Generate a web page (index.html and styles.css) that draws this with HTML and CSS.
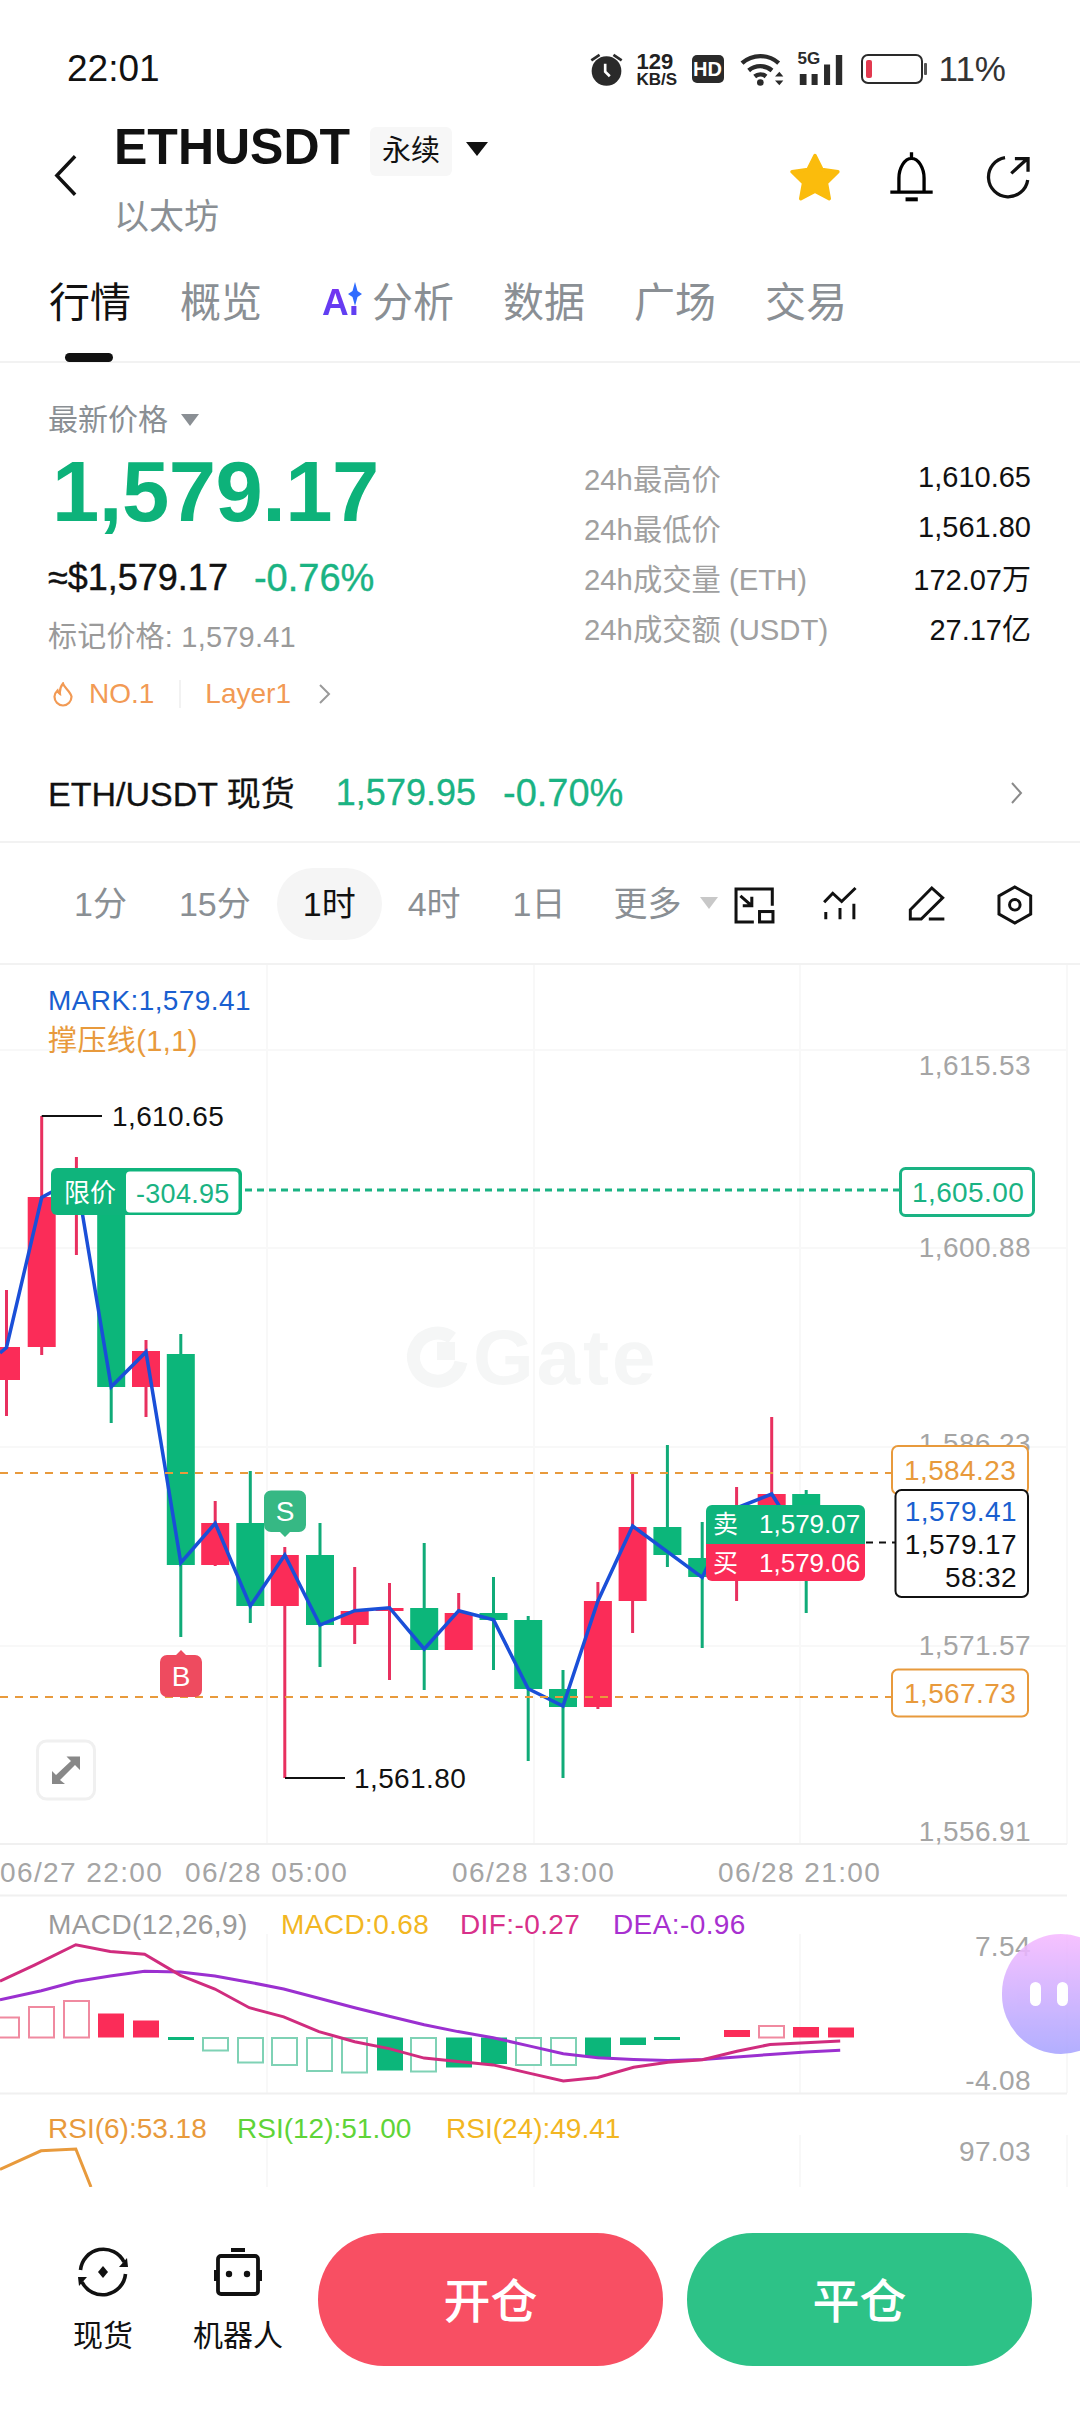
FILE: index.html
```html
<!DOCTYPE html>
<html lang="zh-CN">
<head>
    <meta charset="UTF-8">
    <meta name="viewport" content="width=device-width, initial-scale=1.0">
    <title>ETHUSDT</title>
    <link rel="stylesheet" href="styles.css">
</head>
<body>
<div class="page">
    <div class="status-bar">
        <span class="clock">22:01</span>
        <div class="status-icons">
            <svg class="ic-alarm" viewBox="88 62 100 108"><circle cx="138" cy="122" r="45" fill="#2a2a2a"/><path d="M92 90l25-17M184 90l-25-17" stroke="#2a2a2a" stroke-width="8" fill="none"/><path d="M134 100v24l14 14" stroke="#fff" stroke-width="8" fill="none"/></svg>
            <div class="net"><span class="net-num">129</span><span class="net-unit">KB/S</span></div>
            <span class="hd">HD</span>
            <svg class="ic-wifi" viewBox="534 60 138 110"><path d="M546 96a82 82 0 0 1 110 0M566 118a54 54 0 0 1 70 0M584 136a26 26 0 0 1 34 0" stroke="#2a2a2a" stroke-width="13" fill="none"/><circle cx="601" cy="154" r="10" fill="#2a2a2a"/><path d="M645 136h25l-12-14zM645 148h25l-12 14z" fill="#2a2a2a"/></svg>
            <div class="signal">
                <span class="five-g">5G</span>
                <svg class="ic-bars" viewBox="720 66 136 98"><path d="M725 128h20v33h-20zM760 128h18v33h-18zM797 100h18v61h-18zM832 72h19v89h-19z" fill="#2a2a2a"/></svg>
            </div>
            <div class="battery"><span class="battery-level"></span></div>
            <span class="battery-pct">11%</span>
        </div>
    </div>

    <div class="header">
        <svg class="ic-back" viewBox="0 0 26 46"><path d="M23 3L4 23l19 20" stroke="#111" stroke-width="3.6" fill="none"/></svg>
        <div class="title-block">
            <div class="title-line">
                <span class="symbol">ETHUSDT</span>
                <span class="chip">永续</span>
                <span class="chip-caret"></span>
            </div>
            <div class="subtitle">以太坊</div>
        </div>
        <div class="header-actions">
            <svg class="ic-star" viewBox="1 1 22 21"><path d="M12 2.500l3 6 6.800 1-4.900 4.800 1.200 6.700-6.100-3.200-6.100 3.200 1.200-6.700-4.900-4.800 6.800-1z" fill="#fbbc0c" stroke="#fbbc0c" stroke-width="1.500" stroke-linejoin="round"/></svg>
            <svg class="ic-bell" viewBox="988 358 136 154"><path d="M1018 482V440c0-30 17-60 38-60s38 30 38 60v42M992 482h128M1056 362v18" stroke="#000" stroke-width="10" fill="none"/><rect x="1038" y="498" width="37" height="12"/></svg>
            <svg class="ic-share" viewBox="1274 372 140 138"><path d="M1335 382A60 60 0 1 0 1404 450M1354 430l48-44M1365 385h40v40" stroke="#111" stroke-width="10" fill="none"/></svg>
        </div>
    </div>

    <div class="tabs">
        <span class="tab tab-active">行情</span>
        <span class="tab">概览</span>
        <span class="tab tab-ai"><span class="ai-mark">Ai<svg class="ai-spark" viewBox="0 0 14 24"><path d="M7 0l2.500 9L14 12l-4.500 3L7 24l-2.500-9L0 12l4.500-3z" fill="#2f6bff"/></svg></span>分析</span>
        <span class="tab">数据</span>
        <span class="tab">广场</span>
        <span class="tab">交易</span>
    </div>

    <div class="ticker">
        <div class="ticker-left">
            <div class="last-label">最新价格<span class="caret-gray"></span></div>
            <div class="last-price">1,579.17</div>
            <div class="fiat-line"><span>≈$1,579.17</span><span class="pct">-0.76%</span></div>
            <div class="mark-line">标记价格: 1,579.41</div>
            <div class="rank-line">
                <svg class="ic-flame" viewBox="0 0 22 25"><path d="M11 1.500c1 4 7 7.500 8.500 13a8.700 8.700 0 0 1-8.500 9 8.700 8.700 0 0 1-8.500-9c0-3 1.500-4.500 3-6 .5 2 1.500 3 2.500 3.500C7.500 8 9 4 11 1.500z" stroke="#f29a54" stroke-width="2.200" fill="none"/></svg>
                <span>NO.1</span>
                <span class="rank-sep"></span>
                <span>Layer1</span>
                <svg class="ic-chevron" viewBox="0 0 13 20"><path d="M2 1l9 9-9 9" stroke="#9a9a9a" stroke-width="2" fill="none"/></svg>
            </div>
        </div>
        <div class="ticker-right">
            <span class="stat-label">24h最高价</span><span class="stat-value">1,610.65</span>
            <span class="stat-label">24h最低价</span><span class="stat-value">1,561.80</span>
            <span class="stat-label">24h成交量 (ETH)</span><span class="stat-value">172.07万</span>
            <span class="stat-label">24h成交额 (USDT)</span><span class="stat-value">27.17亿</span>
        </div>
    </div>

    <div class="spot-row">
        <span class="spot-name">ETH/USDT 现货</span>
        <span class="spot-price">1,579.95</span>
        <span class="spot-pct">-0.70%</span>
        <svg class="ic-chevron spot-chevron" viewBox="0 0 13 22"><path d="M2 1l9 10-9 10" stroke="#8a8a8a" stroke-width="2" fill="none"/></svg>
    </div>

    <div class="tf-bar">
        <span class="tf">1分</span>
        <span class="tf">15分</span>
        <span class="tf tf-active">1时</span>
        <span class="tf">4时</span>
        <span class="tf">1日</span>
        <span class="tf tf-more">更多</span>
        <span class="caret-light"></span>
        <svg class="tool-ic tool-a" viewBox="150 70 140 125"><path d="M218 183H165V85H273V135M178 105l34 30M212 108v27h-27" stroke="#111" stroke-width="9" fill="none"/><rect x="235" y="152" width="40" height="31" stroke="#111" stroke-width="9" fill="none"/></svg>
        <svg class="tool-ic tool-b" viewBox="420 75 120 115"><path d="M432 130l26-27 27 25 42-41M437 160v22M480 148v34M522 135v47" stroke="#111" stroke-width="9" fill="none"/></svg>
        <svg class="tool-ic tool-c" viewBox="680 72 125 115"><path d="M692 178V150L757 84l33 30-65 64zM748 178h47" stroke="#111" stroke-width="9" fill="none"/></svg>
        <svg class="tool-ic tool-d" viewBox="945 72 115 125"><path d="M1002 80l48 27v55l-48 27-48-27v-55z" stroke="#111" stroke-width="9" fill="none"/><circle cx="1002" cy="134" r="16" stroke="#111" stroke-width="9" fill="none"/></svg>
    </div>

    <div class="chart-wrap">
        <svg class="chart" viewBox="0 965 1080 1222" width="1080" height="1222">
            <!-- grid -->
            <path class="grid" d="M267 965V1844M534 965V1844M800 965V1844M1067 965V1844M0 1050H1067M0 1248H1067M0 1447H1067M0 1646H1067"/>
            <path class="grid" d="M267 1934V2093M534 1934V2093M800 1934V2093M1067 1934V2093M267 2135V2187M534 2135V2187M800 2135V2187M1067 2135V2187"/>
            <path class="rule" d="M0 1844H1067M0 1895.500H1067M0 2093.500H1067"/>

            <!-- watermark -->
            <path class="wm-ring" d="M452 1338A24 24 0 1 0 461 1362"/>
            <rect class="wm-fill" x="437" y="1342" width="18" height="18"/>
            <text class="wm-text" x="473" y="1384">Gate</text>

            <!-- candles -->
            <g class="wick-red">
                <path d="M6.500 1290V1416M41.700 1116V1355M76.400 1157V1255M146 1340V1417M215.200 1501V1566M284.800 1547V1778M354.700 1567V1644M389.500 1583V1680M458.700 1593V1613M597.900 1582V1709M632.600 1472V1633M736.600 1487V1601M771.700 1417V1500"/>
            </g>
            <g class="wick-green">
                <path d="M111.200 1380V1423M180.800 1334V1637M250.300 1471V1623M320 1523V1667M424.200 1543V1690M493.500 1577V1670M528.200 1616V1761M563 1670V1778M667.400 1445V1567M702.200 1522V1648M806.200 1490V1613"/>
            </g>
            <g class="body-red">
                <rect x="-8" y="1347" width="28" height="33"/>
                <rect x="27.700" y="1197" width="28" height="150"/>
                <rect x="62.400" y="1168" width="28" height="47"/>
                <rect x="132" y="1351" width="28" height="36"/>
                <rect x="201.200" y="1523" width="28" height="42"/>
                <rect x="270.800" y="1555" width="28" height="51"/>
                <rect x="340.700" y="1611" width="28" height="14"/>
                <rect x="375.500" y="1608" width="28" height="3"/>
                <rect x="444.700" y="1613" width="28" height="37"/>
                <rect x="583.900" y="1601" width="28" height="106"/>
                <rect x="618.600" y="1527" width="28" height="74"/>
                <rect x="757.700" y="1494" width="28" height="16"/>
            </g>
            <g class="body-green">
                <rect x="97.200" y="1200" width="28" height="187"/>
                <rect x="166.800" y="1354" width="28" height="211"/>
                <rect x="236.300" y="1523" width="28" height="83"/>
                <rect x="306" y="1555" width="28" height="70"/>
                <rect x="410.200" y="1608" width="28" height="42"/>
                <rect x="479.500" y="1613" width="28" height="7"/>
                <rect x="514.200" y="1620" width="28" height="69"/>
                <rect x="549" y="1689" width="28" height="18"/>
                <rect x="653.400" y="1527" width="28" height="28"/>
                <rect x="688.200" y="1558" width="28" height="19"/>
                <rect x="792.200" y="1494" width="28" height="16"/>
            </g>

            <polyline class="mark-line-svg" points="0,1353 6.500,1347.500 41.700,1197.500 51.700,1192 76,1180 82.600,1215 111.200,1386.800 146,1352 180.800,1562.700 215.200,1523.300 250.300,1606 284.800,1555 320,1625 354.700,1610.700 389.500,1607.700 424.200,1649 458.700,1610.700 493.500,1619.700 528.200,1688.700 563,1706 597.900,1601 632.600,1526 702.200,1577.300 736.600,1508 771.700,1494 785,1515"/>

            <!-- support and resistance, limit order -->
            <path class="dash-orange" d="M0 1473H892M0 1697H892"/>
            <path class="dash-green" d="M245 1190H900"/>
            <path class="dash-black" d="M866 1542.500H895"/>

            <!-- legend -->
            <text class="t28 c-mark" x="48" y="1010">MARK:1,579.41</text>
            <text class="t-legend c-orange" x="48" y="1051">撑压线(1,1)</text>

            <!-- high and low -->
            <path class="leader" d="M41.700 1116H102M285 1778H345"/>
            <text class="t28 c-black" x="112" y="1126">1,610.65</text>
            <text class="t28 c-black" x="354" y="1788">1,561.80</text>

            <!-- limit tag -->
            <rect class="tag-green" x="51" y="1168" width="191" height="47" rx="6"/>
            <rect class="tag-white" x="126" y="1171.500" width="112.500" height="41" rx="4"/>
            <text class="t26 c-white" x="64" y="1202">限价</text>
            <text class="t27 c-green" x="136" y="1203">-304.95</text>

            <!-- axis labels -->
            <g class="axis">
                <text x="1031" y="1075">1,615.53</text>
                <text x="1031" y="1257">1,600.88</text>
                <text x="1031" y="1453">1,586.23</text>
                <text x="1031" y="1655">1,571.57</text>
                <text x="1031" y="1841">1,556.91</text>
                <text x="1031" y="1956">7.54</text>
                <text x="1031" y="2090">-4.08</text>
                <text x="1031" y="2161">97.03</text>
            </g>

            <!-- price boxes -->
            <rect class="box-green" x="900.500" y="1168.500" width="133" height="47" rx="5"/>
            <text class="t28 c-green" x="912" y="1202">1,605.00</text>
            <rect class="box-orange" x="892" y="1446" width="136" height="48" rx="6"/>
            <text class="t28 c-orange" x="904" y="1480">1,584.23</text>
            <rect class="box-orange" x="892" y="1669.500" width="136" height="47" rx="6"/>
            <text class="t28 c-orange" x="904" y="1703">1,567.73</text>
            <rect class="box-black" x="895.500" y="1490" width="132.500" height="107" rx="6"/>
            <g class="last-box">
                <text class="c-mark" x="1017" y="1521">1,579.41</text>
                <text class="c-black" x="1017" y="1554">1,579.17</text>
                <text class="c-black" x="1017" y="1587">58:32</text>
            </g>

            <!-- sell and buy tag -->
            <path class="tag-green" d="M706 1544V1511a6 6 0 0 1 6-6H859a6 6 0 0 1 6 6V1544z"/>
            <path class="tag-red" d="M706 1544V1575a6 6 0 0 0 6 6H859a6 6 0 0 0 6-6V1544z"/>
            <text class="t25 c-white" x="713" y="1533">卖</text>
            <text class="t26 c-white" x="759" y="1533">1,579.07</text>
            <text class="t25 c-white" x="713" y="1572">买</text>
            <text class="t26 c-white" x="759" y="1572">1,579.06</text>

            <!-- trade markers -->
            <path class="mark-s" d="M271 1490.500H299a7 7 0 0 1 7 7V1525a7 7 0 0 1-7 7H290l-5 5-5-5H271a7 7 0 0 1-7-7V1497.500a7 7 0 0 1 7-7z"/>
            <text class="t-marker" x="285" y="1521">S</text>
            <path class="mark-b" d="M167 1655H176l5-5 5 5H195a7 7 0 0 1 7 7V1690a7 7 0 0 1-7 7H167a7 7 0 0 1-7-7V1662a7 7 0 0 1 7-7z"/>
            <text class="t-marker" x="181" y="1686">B</text>

            <!-- expand button -->
            <rect class="expand-btn" x="37.500" y="1741" width="57" height="58" rx="9"/>
            <path class="expand-ic" d="M80 1756.500V1770L75 1765 60 1780 65 1784H52V1771L56 1775 71 1761 66.500 1756.500z"/>

            <!-- time axis -->
            <g class="times">
                <text x="0" y="1882">06/27 22:00</text>
                <text x="185" y="1882">06/28 05:00</text>
                <text x="452" y="1882">06/28 13:00</text>
                <text x="718" y="1882">06/28 21:00</text>
            </g>

            <!-- macd -->
            <text class="t28 c-gray" x="48" y="1934">MACD(12,26,9)</text>
            <text class="t28 c-yellow" x="281" y="1934">MACD:0.68</text>
            <text class="t28 c-dif" x="460" y="1934">DIF:-0.27</text>
            <text class="t28 c-dea" x="613" y="1934">DEA:-0.96</text>
            <g class="hollow-red">
                <rect x="-6" y="2017.500" width="25" height="20"/>
                <rect x="29" y="2007" width="25" height="30.500"/>
                <rect x="64" y="2001" width="25" height="36.500"/>
                <rect x="759" y="2026" width="25" height="11.500"/>
            </g>
            <g class="solid-red">
                <rect x="98" y="2013.500" width="26" height="24"/>
                <rect x="133" y="2020.500" width="26" height="17"/>
                <rect x="724" y="2030" width="26" height="7"/>
                <rect x="793" y="2027" width="26" height="10.500"/>
                <rect x="828" y="2027.500" width="26" height="10"/>
            </g>
            <g class="hollow-green">
                <rect x="203" y="2038" width="25" height="12.500"/>
                <rect x="238" y="2038" width="25" height="24.500"/>
                <rect x="272" y="2038" width="25" height="27"/>
                <rect x="307" y="2038" width="25" height="33"/>
                <rect x="342" y="2038" width="25" height="34.500"/>
                <rect x="411" y="2038" width="25" height="33.500"/>
                <rect x="516" y="2038" width="25" height="27"/>
                <rect x="551" y="2038" width="25" height="27"/>
            </g>
            <g class="solid-green">
                <rect x="168" y="2037" width="26" height="3"/>
                <rect x="377" y="2037.500" width="26" height="33"/>
                <rect x="446" y="2037.500" width="26" height="30"/>
                <rect x="481" y="2037.500" width="26" height="26.500"/>
                <rect x="585" y="2037.500" width="26" height="19.500"/>
                <rect x="620" y="2037.500" width="26" height="7.500"/>
                <rect x="654" y="2037" width="26" height="3"/>
            </g>
            <polyline class="line-dea" points="0,1999.900 41.300,1990.700 75.800,1981.500 110.200,1976 144.600,1971.300 180.400,1972 214.900,1976 249.300,1982.200 283.700,1989 318.900,1998.200 354.700,2007.700 389.100,2016.200 424.200,2024.800 458,2031.600 493.100,2037.700 528.900,2045.900 563.300,2053.700 597.800,2057.800 633.600,2059.500 668,2060.500 702.500,2059.500 736.900,2057.100 770,2054.400 805.800,2052 840.200,2050.300"/>
            <polyline class="line-dif" points="0,1981.200 34.400,1965.100 75.800,1944.700 110.200,1951.500 144.600,1954.300 180.400,1975.400 214.900,1989 249.300,2007.700 283.700,2016.900 318.900,2031.600 354.700,2041.800 389.100,2048.600 424.200,2058.100 458,2061.500 493.100,2064.900 528.900,2073.100 563.300,2081 597.800,2077.500 633.600,2067.300 668,2062.200 702.500,2059.800 736.900,2051.300 770,2044.500 805.800,2042.800 840.200,2041.100"/>

            <!-- rsi -->
            <text class="t-rsi c-orange" x="48" y="2138">RSI(6):53.18</text>
            <text class="t-rsi c-lime" x="237" y="2138">RSI(12):51.00</text>
            <text class="t-rsi c-yellow" x="446" y="2138">RSI(24):49.41</text>
            <polyline class="line-rsi" points="0,2169.500 41,2150.800 75.800,2149 91,2187"/>
        </svg>
        <div class="float-ball"><span class="eye"></span><span class="eye"></span></div>
    </div>

    <div class="bottom-bar">
        <div class="tool tool-spot">
            <svg class="tool-icon" viewBox="0 0 52 52"><path d="M3.500 24A23 23 0 0 1 47 16M48.500 28A23 23 0 0 1 5 36" stroke="#111" stroke-width="3.600" fill="none"/><path d="M42 21l9 0-1-9zM10 31l-9 0 1 9z" fill="#111"/><path d="M26 20l5 6-5 6-5-6z" fill="#111"/></svg>
            <span class="tool-label">现货</span>
        </div>
        <div class="tool tool-robot">
            <svg class="tool-icon" viewBox="0 0 52 52"><rect x="19" y="2" width="14" height="4" fill="#111"/><rect x="6" y="10" width="40" height="38" rx="3" stroke="#111" stroke-width="3.800" fill="none"/><rect x="2" y="24" width="3" height="11" fill="#111"/><rect x="47" y="24" width="3" height="11" fill="#111"/><circle cx="17" cy="28" r="3.200" fill="#111"/><circle cx="35" cy="28" r="3.200" fill="#111"/></svg>
            <span class="tool-label">机器人</span>
        </div>
        <button class="action action-open">开仓</button>
        <button class="action action-close">平仓</button>
    </div>
</div>
</body>
</html>
```

FILE: styles.css
```css
* {
    box-sizing: border-box;
}
body {
    margin: 0;
    background-color: #fff;
    font-family: "Liberation Sans", "Noto Sans CJK SC", sans-serif;
    color: #111;
}
.page {
    position: relative;
    width: 1080px;
    height: 2414px;
    overflow: hidden;
    background-color: #fff;
}

/* status bar */
.status-bar {
    display: flex;
    align-items: center;
    justify-content: space-between;
    height: 100px;
    padding: 38px 74px 0 67px;
}
.clock {
    font-size: 37px;
    line-height: 62px;
}
.status-icons {
    display: flex;
    align-items: center;
    gap: 14px;
}
.ic-alarm {
    width: 33px;
    height: 36px;
}
.net {
    display: flex;
    flex-direction: column;
    width: 41px;
    line-height: 1;
    color: #222;
}
.net-num {
    font-size: 22px;
    font-weight: 700;
    line-height: 21px;
}
.net-unit {
    font-size: 17px;
    font-weight: 700;
    line-height: 15px;
    white-space: nowrap;
}
.hd {
    width: 32px;
    height: 28px;
    border-radius: 5px;
    background-color: #2a2a2a;
    color: #fff;
    font-size: 20px;
    font-weight: 700;
    line-height: 28px;
    text-align: center;
}
.ic-wifi {
    width: 46px;
    height: 37px;
}
.signal {
    position: relative;
    width: 46px;
    height: 33px;
}
.five-g {
    position: absolute;
    left: 0;
    top: -3px;
    font-size: 17px;
    font-weight: 700;
    line-height: 17px;
    color: #2a2a2a;
}
.ic-bars {
    position: absolute;
    left: 0;
    top: 0;
    width: 46px;
    height: 33px;
}
.battery {
    position: relative;
    width: 62px;
    height: 30px;
    margin-left: 3px;
    margin-right: 5px;
    padding: 4px 3px;
    border: 2px solid #2a2a2a;
    border-radius: 7px;
}
.battery::after {
    content: "";
    position: absolute;
    right: -6px;
    top: 7px;
    width: 3px;
    height: 12px;
    background-color: #555;
    border-radius: 1px;
}
.battery-level {
    display: block;
    width: 6px;
    height: 100%;
    border-radius: 2px;
    background-color: #e2394f;
}
.battery-pct {
    margin-left: -3px;
    font-size: 35px;
    line-height: 40px;
    color: #333;
}

/* header */
.header {
    display: flex;
    align-items: flex-start;
    height: 138px;
    padding: 22px 49px 0 53px;
}
.ic-back {
    width: 25px;
    height: 45px;
    margin-top: 31px;
}
.title-block {
    margin-left: 36px;
}
.title-line {
    display: flex;
    align-items: center;
    height: 54px;
}
.symbol {
    font-size: 50px;
    font-weight: 700;
    line-height: 54px;
    margin-top: -4px;
}
.chip {
    margin-left: 20px;
    margin-top: 4px;
    padding: 0 12px;
    height: 49px;
    border-radius: 6px;
    background-color: #f7f7f7;
    font-size: 29px;
    line-height: 49px;
}
.chip-caret {
    width: 0;
    height: 0;
    margin-left: 14px;
    border-left: 11px solid transparent;
    border-right: 11px solid transparent;
    border-top: 14px solid #111;
}
.subtitle {
    margin-top: 20px;
    font-size: 35px;
    line-height: 42px;
    color: #8a8f94;
}
.header-actions {
    display: flex;
    align-items: center;
    margin-left: auto;
    margin-top: 29px;
}
.ic-star {
    width: 52px;
    height: 49px;
}
.ic-bell {
    width: 45px;
    height: 51px;
    margin-left: 48px;
}
.ic-share {
    width: 46px;
    height: 46px;
    margin-left: 51px;
}

/* tabs */
.tabs {
    display: flex;
    gap: 49px;
    height: 125px;
    padding: 41px 0 0 49px;
    border-bottom: 2px solid #f2f2f2;
    font-size: 41px;
    line-height: 48px;
    color: #8a8f94;
}
.tab {
    position: relative;
    display: flex;
}
.tab-active {
    color: #111;
}
.tab-active::after {
    content: "";
    position: absolute;
    left: 16px;
    top: 74px;
    width: 48px;
    height: 9px;
    border-radius: 5px;
    background-color: #111;
}
.tab-ai {
    margin-left: 11px;
}
.ai-mark {
    position: relative;
    width: 50px;
    font-size: 37px;
    font-weight: 700;
    background: linear-gradient(180deg, #7c2ff0, #3a55f5);
    -webkit-background-clip: text;
    background-clip: text;
    color: transparent;
}
.ai-spark {
    position: absolute;
    left: 26px;
    top: 3px;
    width: 14px;
    height: 24px;
    background-color: #fff;
}

/* ticker */
.ticker {
    display: flex;
    height: 387px;
    padding: 37px 49px 0 48px;
}
.ticker-left {
    width: 536px;
}
.last-label {
    display: flex;
    align-items: center;
    font-size: 30px;
    line-height: 40px;
    color: #8a8f94;
}
.caret-gray {
    width: 0;
    height: 0;
    margin-left: 13px;
    border-left: 9px solid transparent;
    border-right: 9px solid transparent;
    border-top: 12px solid #8a8f94;
}
.last-price {
    margin-top: 7px;
    margin-left: 4px;
    font-size: 85px;
    font-weight: 700;
    line-height: 90px;
    letter-spacing: -0.5px;
    color: #0db27a;
}
.fiat-line {
    display: flex;
    gap: 26px;
    margin-top: 19px;
    font-size: 36px;
    line-height: 44px;
    -webkit-text-stroke: 0.4px;
}
.pct {
    font-size: 38px;
    color: #1ab383;
}
.mark-line {
    margin-top: 17px;
    font-size: 29px;
    line-height: 40px;
    letter-spacing: 0.2px;
    color: #9a9a9a;
}
.rank-line {
    display: flex;
    align-items: center;
    margin-top: 17px;
    font-size: 28px;
    line-height: 40px;
    color: #f29a54;
}
.ic-flame {
    width: 22px;
    height: 25px;
    margin: 0 15px 0 4px;
}
.rank-sep {
    width: 2px;
    height: 28px;
    margin: 0 24px 0 25px;
    background-color: #f2f2f2;
}
.ic-chevron {
    width: 13px;
    height: 20px;
    margin-left: 27px;
}
.ticker-right {
    display: grid;
    grid-template-columns: 1fr auto;
    grid-auto-rows: 50px;
    align-items: center;
    flex: 1;
    height: 200px;
    margin-top: 52px;
}
.stat-label {
    font-size: 29.3px;
    color: #a0a0a0;
}
.stat-value {
    font-size: 29px;
    text-align: right;
}

/* spot row */
.spot-row {
    display: flex;
    align-items: center;
    height: 93px;
    padding: 0 57px 8px 48px;
    border-bottom: 2px solid #f2f2f2;
    font-size: 36px;
    color: #1ab383;
    -webkit-text-stroke: 0.3px;
}
.spot-name {
    font-size: 34px;
    color: #111;
}
.spot-price {
    margin-left: 41px;
    margin-top: 3px;
}
.spot-pct {
    margin-left: 27px;
    margin-top: 3px;
    font-size: 38px;
}
.spot-chevron {
    width: 13px;
    height: 22px;
    margin-left: auto;
    margin-top: 3px;
}

/* timeframe */
.tf-bar {
    display: flex;
    align-items: flex-start;
    height: 122px;
    padding: 25px 0 0 48px;
    border-bottom: 2px solid #f2f2f2;
}
.tf {
    height: 72px;
    padding: 0 26px;
    font-size: 34px;
    line-height: 72px;
    color: #8a8f94;
}
.tf-active {
    border-radius: 36px;
    background-color: #f5f5f5;
    color: #111;
}
.tf-more {
    margin-left: -4px;
    padding-right: 18px;
}
.caret-light {
    width: 0;
    height: 0;
    margin-top: 29px;
    border-left: 9px solid transparent;
    border-right: 9px solid transparent;
    border-top: 12px solid #c8c8c8;
}
.tool-ic {
    flex: none;
    margin-top: 16px;
}
.tool-a {
    width: 47px;
    height: 42px;
    margin-left: 13px;
}
.tool-b {
    width: 40px;
    height: 38px;
    margin-left: 42px;
}
.tool-c {
    width: 42px;
    height: 38px;
    margin-left: 46px;
}
.tool-d {
    width: 38px;
    height: 42px;
    margin-left: 48px;
}

/* chart */
.chart-wrap {
    position: relative;
    height: 1222px;
}
.chart {
    display: block;
    font-family: "Liberation Sans", "Noto Sans CJK SC", sans-serif;
}
.grid {
    stroke: #f8f8f8;
    stroke-width: 2;
    fill: none;
}
.rule {
    stroke: #f0f0f0;
    stroke-width: 2;
    fill: none;
}
.wm-ring {
    stroke: #f5f6f6;
    stroke-width: 13;
    fill: none;
}
.wm-fill {
    fill: #f5f6f6;
}
.wm-text {
    fill: #f5f6f6;
    font-size: 78px;
    font-weight: 700;
    letter-spacing: 3px;
}
.wick-red path {
    stroke: #e8305f;
    stroke-width: 3;
    fill: none;
}
.wick-green path {
    stroke: #10ab78;
    stroke-width: 3;
    fill: none;
}
.body-red rect {
    fill: #fb2c58;
}
.body-green rect {
    fill: #0cb67a;
}
.mark-line-svg {
    stroke: #1a4fd8;
    stroke-width: 3.5;
    fill: none;
}
.dash-orange {
    stroke: #e89a3c;
    stroke-width: 2;
    stroke-dasharray: 8 7;
    fill: none;
}
.dash-green {
    stroke: #1ab383;
    stroke-width: 3;
    stroke-dasharray: 7 5;
    fill: none;
}
.dash-black {
    stroke: #111;
    stroke-width: 2;
    stroke-dasharray: 7 6;
    fill: none;
}
.leader {
    stroke: #111;
    stroke-width: 2;
    fill: none;
}
.t28 {
    font-size: 28px;
    letter-spacing: 0.4px;
}
.t27 {
    font-size: 27px;
    letter-spacing: 0.3px;
}
.t26 {
    font-size: 26px;
}
.t25 {
    font-size: 25px;
}
.t-legend {
    font-size: 29px;
    letter-spacing: 0.4px;
}
.t-rsi {
    font-size: 28px;
}
.c-mark {
    fill: #1a5fd0;
}
.c-orange {
    fill: #e89a3c;
}
.c-black {
    fill: #111;
}
.c-white {
    fill: #fff;
}
.c-green {
    fill: #1ab383;
}
.c-gray {
    fill: #9a9a9a;
}
.c-yellow {
    fill: #f2b622;
}
.c-dif {
    fill: #d8308a;
}
.c-dea {
    fill: #a830d0;
}
.c-lime {
    fill: #5fd438;
}
.tag-green {
    fill: #0fb47c;
}
.tag-red {
    fill: #fb2c58;
}
.tag-white {
    fill: #fff;
}
.axis text {
    fill: #a5a5a5;
    font-size: 28px;
    letter-spacing: 0.4px;
    text-anchor: end;
}
.box-green {
    fill: #fff;
    stroke: #1ab383;
    stroke-width: 3;
}
.box-orange {
    fill: #fff;
    stroke: #e89a3c;
    stroke-width: 2;
}
.box-black {
    fill: #fff;
    stroke: #111;
    stroke-width: 2;
}
.last-box text {
    font-size: 28px;
    letter-spacing: 0.4px;
    text-anchor: end;
}
.mark-s {
    fill: #36b884;
}
.mark-b {
    fill: #ee4b5f;
}
.t-marker {
    fill: #fff;
    font-size: 28px;
    text-anchor: middle;
}
.expand-btn {
    fill: #fff;
    stroke: #f0f0f0;
    stroke-width: 3;
}
.expand-ic {
    fill: #888;
}
.times text {
    fill: #a5a5a5;
    font-size: 28px;
    letter-spacing: 1.4px;
}
.hollow-red rect {
    fill: #fff;
    stroke: #f08aa0;
    stroke-width: 2;
}
.solid-red rect {
    fill: #fb2c58;
}
.hollow-green rect {
    fill: #fff;
    stroke: #7fd2b5;
    stroke-width: 2;
}
.solid-green rect {
    fill: #0cb67a;
}
.line-dif {
    stroke: #d02c7e;
    stroke-width: 3;
    fill: none;
}
.line-dea {
    stroke: #9b30d0;
    stroke-width: 3;
    fill: none;
}
.line-rsi {
    stroke: #e89a3c;
    stroke-width: 3;
    fill: none;
}
.float-ball {
    position: absolute;
    right: -40px;
    top: 969px;
    display: flex;
    align-items: center;
    gap: 16px;
    width: 118px;
    height: 120px;
    padding-left: 28px;
    border-radius: 59px;
    background: linear-gradient(180deg, #f6baff, #a8a4ff);
    opacity: 0.88;
}
.eye {
    width: 11px;
    height: 24px;
    border-radius: 6px;
    background-color: #fff;
}

/* bottom bar */
.bottom-bar {
    display: flex;
    align-items: flex-start;
    height: 227px;
    padding: 46px 0 0 48px;
}
.tool {
    display: flex;
    flex-direction: column;
    align-items: center;
    height: 133px;
    padding-top: 13px;
}
.tool-spot {
    width: 110px;
}
.tool-robot {
    width: 100px;
    margin-left: 30px;
}
.tool-icon {
    width: 52px;
    height: 52px;
}
.tool-label {
    margin-top: 20px;
    font-size: 30px;
    line-height: 36px;
    white-space: nowrap;
}
.action {
    width: 345px;
    height: 133px;
    padding-bottom: 6px;
    border: none;
    border-radius: 66px;
    color: #fff;
    font-family: inherit;
    font-size: 47px;
    font-weight: 500;
}
.action-open {
    margin-left: 30px;
    background-color: #f84f63;
}
.action-close {
    margin-left: 24px;
    background-color: #2dc287;
}
```
